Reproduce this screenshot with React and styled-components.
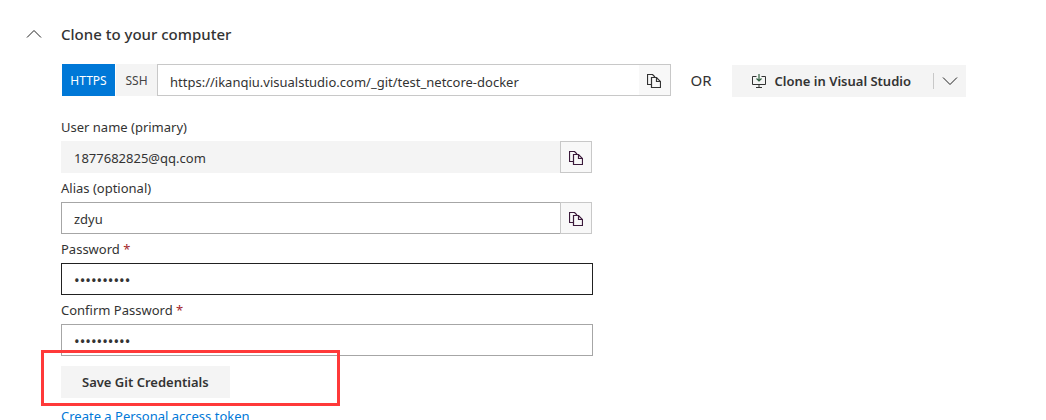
import { useState } from "react";
import styled, { createGlobalStyle } from "styled-components";

const GlobalStyle = createGlobalStyle`
  * {
    box-sizing: border-box;
  }

  body {
    margin: 0;
    height: 100vh;
    overflow: hidden;
    background-color: #fff;
    color: #333;
    font-family: "Noto Sans", "Open Sans", sans-serif;
    font-size: 13px;
  }

  button,
  input {
    font: inherit;
    color: inherit;
    border-radius: 0;
    margin: 0;
  }
`;

const Page = styled.main`
  padding: 20px 80px 0 26px;
`;

const Header = styled.header`
  display: flex;
  align-items: center;
  height: 28px;
  gap: 19px;
`;

const Toggle = styled.button`
  display: flex;
  padding: 0;
  border: none;
  background: none;
`;

const Title = styled.h2`
  margin: 0;
  font-size: 15px;
  font-weight: 500;
`;

const Content = styled.div`
  padding: 16px 0 0 35px;
`;

const CloneRow = styled.div`
  display: flex;
  align-items: flex-start;
`;

const Protocol = styled.button`
  height: 32px;
  width: ${({ $active }) => ($active ? "54px" : "42px")};
  padding: 0;
  border: none;
  border-left: 1px solid #fff;
  font-size: 12px;
  background-color: ${({ $active }) => ($active ? "#0078d7" : "#f4f4f4")};
  color: ${({ $active }) => ($active ? "#fff" : "#444")};
`;

const UrlBox = styled.div`
  display: flex;
  flex: 1;
  max-width: 514px;
  height: 32px;
  border: 1px solid #c8c8c8;
`;

const UrlInput = styled.input`
  flex: 1;
  min-width: 0;
  padding: 4px 12px 0;
  border: none;
  outline: none;
`;

const UrlCopy = styled.button`
  display: flex;
  align-items: center;
  justify-content: center;
  width: 31px;
  padding: 2px 0 0;
  border: none;
  background-color: #f8f8f8;
`;

const Or = styled.span`
  width: 61px;
  line-height: 33px;
  text-align: center;
  font-size: 15px;
`;

const SplitButton = styled.div`
  display: flex;
  align-items: center;
  height: 32px;
  margin-top: 1px;
  background-color: #f4f4f4;
`;

const CloneButton = styled.button`
  display: flex;
  align-items: center;
  height: 32px;
  gap: 9px;
  padding: 0 22px 0 20px;
  border: none;
  background: none;
  font-weight: 600;
`;

const MenuButton = styled.button`
  display: flex;
  align-items: center;
  height: 16px;
  padding: 0 8px;
  border: none;
  border-left: 1px solid #c8c8c8;
  background: none;
`;

const Form = styled.form`
  max-width: 532px;
  padding-top: 15px;
`;

const Label = styled.label`
  display: block;
  height: 29px;
  line-height: 31px;
`;

const Required = styled.span`
  color: #a4262c;
`;

const InputRow = styled.div`
  display: flex;
  height: 32px;
`;

const Input = styled.input`
  flex: 1;
  min-width: 0;
  padding: 2px 12px 0;
  border: 1px solid #a6a6a6;
  outline: none;

  &:read-only {
    border-color: #f4f4f4;
    background-color: #f4f4f4;
  }

  &:focus {
    border-color: #212121;
  }

  &[type="password"] {
    font-size: 15px;
  }
`;

const CopyButton = styled.button`
  display: flex;
  align-items: center;
  justify-content: center;
  width: 32px;
  margin: 0 1px 0 -1px;
  padding: 2px 0 0;
  border: 1px solid #c8c8c8;
  background-color: #f8f8f8;
`;

const SaveArea = styled.div`
  position: relative;
  padding-top: 10px;
`;

const SaveButton = styled.button`
  display: block;
  height: 32px;
  padding: 0 21px;
  border: none;
  background-color: #f4f4f4;
  font-weight: 600;
`;

// red frame drawn over the save button
const Highlight = styled.div`
  position: absolute;
  top: -6px;
  left: -20px;
  width: 299px;
  height: 56px;
  border: 3px solid #ff3939;
  pointer-events: none;
`;

const TokenLink = styled.a`
  display: block;
  padding-top: 8px;
  line-height: 20px;
  color: #0078d7;
  text-decoration: none;
`;

const Chevron = ({ down }) => (
  <svg width="16" height="10" viewBox="0 0 16 10" fill="none" stroke="#222">
    <path d={down ? "M1 1.5L8 8.5L15 1.5" : "M1 8.5L8 1.5L15 8.5"} />
  </svg>
);

const CopyIcon = ({ color = "#333" }) => (
  <svg
    width="14"
    height="14"
    viewBox="0 0 14 14"
    fill="none"
    stroke={color}
    strokeWidth="1.2"
  >
    <path d="M4.5 10.5H0.5V0.5H5.5L8 3" />
    <path d="M4.5 3.5H9.5L13.5 7.5V13.5H4.5Z" />
    <path d="M9.5 3.5V7.5H13.5" />
  </svg>
);

const DownloadIcon = () => (
  <svg width="14" height="14" viewBox="0 0 14 14" fill="none" stroke="#333">
    <path d="M4.5 2.5H0.5V10.5H13.5V2.5H9.5" />
    <path d="M7 10.5V13M4 13.5H10" />
    <path d="M7 0V7M4.5 4.5L7 7L9.5 4.5" stroke="#2f5f3f" strokeWidth="1.2" />
  </svg>
);

const Field = ({ id, label, required, copy, ...rest }) => (
  <div>
    <Label htmlFor={id}>
      {label} {required && <Required>*</Required>}
    </Label>
    <InputRow>
      <Input id={id} {...rest} />
      {copy && (
        <CopyButton type="button" aria-label={`Copy ${label}`}>
          <CopyIcon color="#3b1a3b" />
        </CopyButton>
      )}
    </InputRow>
  </div>
);

const App = () => {
  const [protocol, setProtocol] = useState("HTTPS");
  const [alias, setAlias] = useState("zdyu");
  const [password, setPassword] = useState("abcdefghij");
  const [confirm, setConfirm] = useState("abcdefghij");

  return (
    <Page>
      <GlobalStyle />
      <Header>
        <Toggle aria-label="Collapse">
          <Chevron />
        </Toggle>
        <Title>Clone to your computer</Title>
      </Header>
      <Content>
        <CloneRow>
          {["HTTPS", "SSH"].map((name) => (
            <Protocol
              key={name}
              $active={name === protocol}
              onClick={() => setProtocol(name)}
            >
              {name}
            </Protocol>
          ))}
          <UrlBox>
            <UrlInput
              aria-label="Clone URL"
              readOnly
              value="https://ikanqiu.visualstudio.com/_git/test_netcore-docker"
            />
            <UrlCopy aria-label="Copy clone URL">
              <CopyIcon />
            </UrlCopy>
          </UrlBox>
          <Or>OR</Or>
          <SplitButton>
            <CloneButton>
              <DownloadIcon />
              Clone in Visual Studio
            </CloneButton>
            <MenuButton aria-label="More clone options">
              <Chevron down />
            </MenuButton>
          </SplitButton>
        </CloneRow>

        <Form onSubmit={(e) => e.preventDefault()}>
          <Field
            id="username"
            label="User name (primary)"
            value="1877682825@qq.com"
            readOnly
            copy
          />
          <Field
            id="alias"
            label="Alias (optional)"
            value={alias}
            onChange={(e) => setAlias(e.target.value)}
            copy
          />
          <Field
            id="password"
            label="Password"
            type="password"
            value={password}
            onChange={(e) => setPassword(e.target.value)}
            required
            autoFocus
          />
          <Field
            id="confirm"
            label="Confirm Password"
            type="password"
            value={confirm}
            onChange={(e) => setConfirm(e.target.value)}
            required
          />
          <SaveArea>
            <SaveButton type="submit">Save Git Credentials</SaveButton>
            <Highlight />
          </SaveArea>
          <TokenLink href="#token">Create a Personal access token</TokenLink>
        </Form>
      </Content>
    </Page>
  );
};

export default App;
